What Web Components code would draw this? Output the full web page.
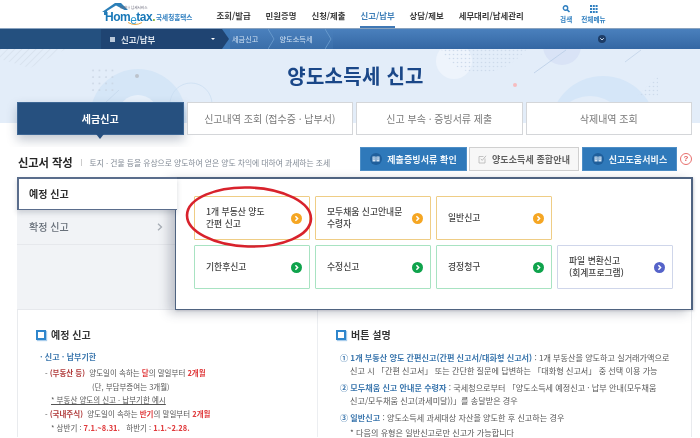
<!DOCTYPE html>
<html lang="ko">
<head>
<meta charset="utf-8">
<title>양도소득세 신고</title>
<style>
  html, body { margin: 0; padding: 0; background: #fff; }
  body { width: 700px; height: 438px; overflow: hidden; font-family: "Noto Sans CJK KR", "Noto Sans", sans-serif; filter: blur(0.5px); }
</style>
</head>
<body>
<ht-header></ht-header>
<ht-subnav></ht-subnav>
<ht-hero></ht-hero>
<ht-filing></ht-filing>
<ht-notes></ht-notes>

<script>
class HtHeader extends HTMLElement {
  constructor() { super(); this.attachShadow({ mode: 'open' }); }
  connectedCallback() {
    this.shadowRoot.innerHTML = `
      <style>
        :host { display: flex; height: 28px; background: #fff; padding-left: 101px; box-sizing: border-box; align-items: stretch; }
        .logo { position: relative; width: 97px; height: 28px; flex: none; }
        .logo svg { position: absolute; left: 0; top: 2px; }
        .logo b { position: absolute; left: 4px; top: 11px; font: 700 12px/12px "Liberation Sans", sans-serif; color: #1878b8; letter-spacing: -.5px; white-space: nowrap; }
        .logo i { font-style: normal; color: #2f9ad0; position: relative; top: 3px; font-weight: 400; }
        .logo em { font-style: normal; color: #8ab83a; }
        .logo small { position: absolute; left: 19px; top: 6px; font-size: 3.6px; line-height: 4px; color: #667; white-space: nowrap; }
        .logo span { position: absolute; left: 55px; top: 12px; font-size: 6.6px; line-height: 10px; font-weight: 700; color: #2f7fc0; white-space: nowrap; }
        nav { display: flex; gap: 14px; margin-left: 18px; }
        a { font-size: 8.4px; font-weight: 700; color: #3c3c3c; line-height: 31px; height: 28px; box-sizing: border-box; padding: 0 0.5px; white-space: nowrap; }
        a.on { color: #3f7fb8; border-bottom: 2px solid #3f78b5; }
        .tools { display: flex; gap: 9px; margin-left: 36px; color: #2f7fc0; font-size: 6.6px; font-weight: 700; text-align: center; }
        .tools div { display: flex; flex-direction: column; align-items: center; padding-top: 5px; line-height: 10px; white-space: nowrap; }
        .tools svg { display: block; margin-bottom: 1px; }
      </style>
      <div class="logo">
        <svg width="30" height="14" viewBox="0 0 30 14"><path d="M1 10 L14 1 L20 1 L27 8 L23.5 8 L15 3.5 L6 9 L6 13 L3 13 L3 10Z" fill="#2c7fb8"/></svg>
        <small>언제나 납세서비스</small>
        <svg style="left:26px;top:22px" width="16" height="4" viewBox="0 0 16 4"><path d="M1 .5 Q8 4.5 15 .5" fill="none" stroke="#eaa640" stroke-width="1"/></svg>
        <b>Hom<i>e</i>tax<em>.</em></b>
        <span>국세청홈택스</span>
      </div>
      <nav>
        <a>조회/발급</a><a>민원증명</a><a>신청/제출</a><a class="on">신고/납부</a><a>상담/제보</a><a>세무대리/납세관리</a>
      </nav>
      <div class="tools">
        <div>
          <svg width="9" height="8" viewBox="0 0 9 8"><circle cx="3.5" cy="3" r="2.2" fill="none" stroke="#2f7fc0" stroke-width="1.4"/><path d="M5 4.6 L7.5 7" stroke="#2f7fc0" stroke-width="1.6"/></svg>
          검색
        </div>
        <div>
          <svg width="9" height="8" viewBox="0 0 9 8" fill="#2f7fc0"><rect x="1" y="0" width="2" height="2"/><rect x="3.8" y="0" width="2" height="2"/><rect x="6.6" y="0" width="2" height="2"/><rect x="1" y="3" width="2" height="2"/><rect x="3.8" y="3" width="2" height="2"/><rect x="6.6" y="3" width="2" height="2"/><rect x="1" y="6" width="2" height="2"/><rect x="3.8" y="6" width="2" height="2"/><rect x="6.6" y="6" width="2" height="2"/></svg>
          전체메뉴
        </div>
      </div>
    `;
  }
}

class HtSubnav extends HTMLElement {
  constructor() { super(); this.attachShadow({ mode: 'open' }); }
  connectedCallback() {
    this.shadowRoot.innerHTML = `
      <style>
        :host { display: flex; height: 21px; align-items: stretch; color: #fff; background: linear-gradient(#4a80bd, #3467a3); border-top: 1px solid #8aa3bf; box-sizing: border-box; position: relative; }
        .lead { width: 101px; background: #24507f; flex: none; }
        .menu { width: 121px; background: #1f4472; flex: none; display: flex; align-items: center; font-size: 8.4px; font-weight: 700; padding-left: 9px; box-sizing: border-box; color: #dfe7f0; }
        .menu u { width: 5px; height: 5px; background: #b9c7d8; margin-right: 6px; }
        .menu em { margin-left: auto; margin-right: 7px; width: 0; height: 0; border: 2.5px solid transparent; border-top-color: #fff; border-bottom: 0; }
        .crumb { display: flex; align-items: center; font-size: 7.2px; color: #cfe0f2; position: relative; background: linear-gradient(#4a80bd, #3a6ea9); }
        .crumb svg { flex: none; height: 20px; width: 8px; }
        .c1 span { padding: 0 10px 0 2px; }
        .c2 span { padding: 0 12px 0 3px; }
        .toggle { position: absolute; left: 598px; top: 6px; width: 8px; height: 8px; border-radius: 50%; background: #1d3c66; }
        .toggle svg { display: block; }
      </style>
      <div class="lead"></div>
      <div class="menu"><u></u>신고/납부<em></em></div>
      <div class="crumb c1">
        <svg viewBox="0 0 8 20" style="background:#3e78b6"><path d="M0 0 L7 10 L0 20Z" fill="#1f4472"/></svg>
        <span>세금신고</span>
      </div>
      <div class="crumb c2">
        <svg viewBox="0 0 8 20"><path d="M0 0 L6 10 L0 20" fill="none" stroke="#6f9fd0" stroke-width=".8"/></svg>
        <span>양도소득세</span>
        <svg viewBox="0 0 8 20"><path d="M0 0 L6 10 L0 20" fill="none" stroke="#6f9fd0" stroke-width=".8"/></svg>
      </div>
      <div class="toggle"><svg width="8" height="8" viewBox="0 0 8 8"><path d="M2.2 3.2 L4 5 L5.8 3.2" fill="none" stroke="#cfdcec" stroke-width="1"/></svg></div>
    `;
  }
}

class HtTab extends HTMLElement {
  constructor() { super(); this.attachShadow({ mode: 'open' }); }
  connectedCallback() {
    this.shadowRoot.innerHTML = `
      <style>
        :host { display: flex; align-items: center; justify-content: center; flex: 1 1 0; height: 33px; box-sizing: border-box; background: #fff; border: 1px solid #d4d6d9; font-size: 10px; color: #7a7a7a; position: relative; white-space: nowrap; }
        :host([active]) { background: #26507f; border-color: #3d6694; color: #fff; font-weight: 700; box-shadow: 0 5px 10px rgba(40,60,90,.28); }
        :host([active])::after { content: ""; position: absolute; left: 50%; bottom: -5px; margin-left: -4px; border: 4px solid transparent; border-top: 5px solid #26507f; border-bottom: 0; }
      </style>
      <slot></slot>
    `;
  }
}

class HtHero extends HTMLElement {
  constructor() { super(); this.attachShadow({ mode: 'open' }); }
  connectedCallback() {
    this.shadowRoot.innerHTML = `
      <style>
        :host { display: block; position: relative; height: 98px; box-sizing: border-box; overflow: hidden; padding: 53px 8px 0 17px; background: linear-gradient(#e3edf9 0, #e3edf9 74px, #fff 74px); }
        .art { position: absolute; left: 0; top: 0; width: 700px; height: 74px; }
        h1 { position: absolute; left: 11px; right: 0; top: 13px; margin: 0; text-align: center; font-size: 20px; line-height: 28px; font-weight: 700; color: #1a4788; letter-spacing: .25px; }
        .tabs { display: flex; gap: 3px; position: relative; }
      </style>
      <svg class="art" viewBox="0 0 700 74">
        <defs>
          <pattern id="d" width="6.5" height="6.5" patternUnits="userSpaceOnUse"><circle cx="2" cy="2" r=".9" fill="#c8d3e2"/></pattern>
          <pattern id="d2" width="4" height="4" patternUnits="userSpaceOnUse"><circle cx="1.5" cy="1.5" r=".8" fill="#cddaeb"/></pattern>
          <pattern id="h" width="5" height="5" patternUnits="userSpaceOnUse" patternTransform="rotate(45)"><rect width="1" height="5" fill="#d9e3ef"/></pattern>
        </defs>
        <path d="M0 0 H66 L30 19 L0 10Z" fill="url(#h)"/>
        <circle cx="138" cy="68" r="48" fill="#d5e6f7"/>
        <circle cx="138" cy="66" r="20" fill="#e8f1fb"/>
        <circle cx="191" cy="55" r="21" fill="none" stroke="#c9dcf0" stroke-width=".7"/>
        <path d="M105 54 L119 41" stroke="#c5d8ec" stroke-width=".8"/>
        <rect x="91" y="16" width="26" height="26" fill="url(#d)"/>
        <circle cx="137" cy="27" r="2" fill="#bcc3cc"/>
        <circle cx="515" cy="36" r="2" fill="#f6bcc0"/>
        <circle cx="454" cy="12" r="18" fill="#eef4fc"/>
        <circle cx="562" cy="-3" r="19" fill="#d9e3f6"/>
        <path d="M441 0 H527 Q505 26 475 24 Q450 20 441 0Z" fill="url(#d2)"/>
        <path d="M534 24 L566 1" stroke="#b9cde6" stroke-width=".8"/>
        <path d="M625 13 L641 1" stroke="#c2d3e8" stroke-width=".8"/>
        <circle cx="603" cy="80" r="53" fill="#d5e6f8"/>
        <circle cx="590" cy="85" r="38" fill="#e3edf9"/>
        <path d="M636 48 L658 48 L658 26Z" fill="url(#d2)"/>
      </svg>
      <h1>양도소득세 신고</h1>
      <div class="tabs">
        <ht-tab active>세금신고</ht-tab>
        <ht-tab>신고내역 조회 (접수증 · 납부서)</ht-tab>
        <ht-tab>신고 부속 · 증빙서류 제출</ht-tab>
        <ht-tab>삭제내역 조회</ht-tab>
      </div>
    `;
  }
}

class HtAction extends HTMLElement {
  constructor() { super(); this.attachShadow({ mode: 'open' }); }
  connectedCallback() {
    const light = this.hasAttribute('light');
    const icon = light
      ? `<svg width="9" height="9" viewBox="0 0 9 9"><path d="M7 3.5 V8 H1 V1.5 H5.5" fill="none" stroke="#b5b5b5" stroke-width=".8"/><path d="M2.8 3.8 L4.2 5.4 L8 .8" fill="none" stroke="#b5b5b5" stroke-width=".9"/></svg>`
      : `<span class="disc"><svg width="8" height="6" viewBox="0 0 8 6"><path d="M.5 .5 H3.6 V5.5 H.5Z M4.4 .5 H7.5 V5.5 H4.4Z" fill="#d6e6f5"/><path d="M1.2 1.8 H3 M1.2 3.2 H3 M5 1.8 H6.8 M5 3.2 H6.8" stroke="#2a6aa6" stroke-width=".5"/></svg></span>`;
    this.shadowRoot.innerHTML = `
      <style>
        :host { display: flex; align-items: center; justify-content: center; gap: 5px; height: 24px; flex: none; box-sizing: border-box; background: #2f79ba; border: 1px solid #4d8ec6; color: #eef5fb; font-size: 9px; font-weight: 700; white-space: nowrap; letter-spacing: .1px; }
        :host([light]) { background: #f7f7f7; border-color: #d0d0d0; color: #5f5f5f; }
        .disc { display: flex; align-items: center; justify-content: center; width: 12px; height: 12px; border-radius: 50%; background: #1f5f9c; }
        svg { display: block; }
      </style>
      ${icon}<slot></slot>
    `;
  }
}

class HtCard extends HTMLElement {
  constructor() { super(); this.attachShadow({ mode: 'open' }); }
  connectedCallback() {
    const kinds = {
      orange: ['#efcd85', '#f5a623'],
      green: ['#a8e3c2', '#0fa34c'],
      violet: ['#cfd6ea', '#5563c9']
    };
    const k = kinds[this.getAttribute('kind')] || kinds.orange;
    this.shadowRoot.innerHTML = `
      <style>
        :host { display: flex; align-items: center; justify-content: space-between; box-sizing: border-box; width: 116px; height: 44px; padding: 0 7px 0 11px; background: #fff; border: 1px solid ${k[0]}; border-radius: 1px; font-size: 8.8px; line-height: 12px; font-weight: 500; color: #444; }
        i { flex: none; width: 11px; height: 11px; border-radius: 50%; background: ${k[1]}; display: block; }
        svg { display: block; }
      </style>
      <div><slot></slot></div>
      <i><svg width="11" height="11" viewBox="0 0 11 11"><path d="M4.4 3.2 L6.6 5.5 L4.4 7.8" fill="none" stroke="#fff" stroke-width="1.5"/></svg></i>
    `;
  }
}

class HtFiling extends HTMLElement {
  constructor() { super(); this.attachShadow({ mode: 'open' }); }
  connectedCallback() {
    this.shadowRoot.innerHTML = `
      <style>
        :host { display: block; position: relative; margin-top: -1px; padding: 0 8px 0 17px; height: 163px; box-sizing: border-box; }
        .head { display: flex; align-items: center; height: 31px; }
        h2 { margin: 1px 0 0 1px; font-size: 11.3px; line-height: 16px; font-weight: 700; color: #262626; white-space: nowrap; letter-spacing: -.1px; }
        .sep { width: 1px; height: 7px; background: #ccc; margin: 1px 8px 0; }
        .desc { font-size: 7.8px; margin-top: 1px; color: #818a95; white-space: nowrap; letter-spacing: -.02px; }
        .acts { display: flex; gap: 3px; margin-left: auto; align-items: center; align-self: flex-start; margin-top: 1px; }
        .acts ht-action:nth-child(2) { margin-left: -1px; }
        .help { width: 12px; height: 12px; flex: none; border: 1px solid #e8706e; border-radius: 50%; box-sizing: border-box; color: #e05a58; font: 700 8px/10px "Liberation Sans", sans-serif; text-align: center; }
        .body { display: flex; height: 133px; }
        .side { width: 158px; flex: none; display: flex; flex-direction: column; box-sizing: border-box; background: #f1f3f6; border-bottom: 1px solid #e6e8ec; }
        .side .cur { height: 33px; box-sizing: border-box; background: #fff; border-top: 2px solid #5a6d8c; border-left: 2px solid #5a6d8c; border-bottom: 1px solid #5a6d8c; padding-left: 10px; margin-right: -2px; font-size: 10px; font-weight: 700; color: #2c2c2c; line-height: 30px; box-shadow: 0 3px 5px rgba(60,70,90,.2); position: relative; z-index: 2; }
        .side .alt { height: 35px; flex: none; box-sizing: border-box; padding: 0 12px 1px; font-size: 10px; font-weight: 500; color: #68707a; display: flex; align-items: center; justify-content: space-between; border-bottom: 1px solid #e6e8ec; }
        .panel { flex: 1; box-sizing: border-box; background: #fff; border: solid #4f6380; border-width: 2px 2px 1.5px 1.5px; padding: 17px 18px 0 18px; display: grid; grid-template-columns: repeat(4, 116px); grid-auto-rows: 44px; gap: 5px 5px; align-content: start; box-shadow: -6px 3px 10px rgba(60,70,90,.28), 1px 1px 2px rgba(60,70,90,.2); position: relative; z-index: 1; }
        .ring { position: absolute; left: 185px; top: 38px; z-index: 3; }
      </style>
      <div class="head">
        <h2>신고서 작성</h2><span class="sep"></span>
        <span class="desc">토지 · 건물 등을 유상으로 양도하여 얻은 양도 차익에 대하여 과세하는 조세</span>
        <div class="acts">
          <ht-action style="width:107px">제출증빙서류 확인</ht-action>
          <ht-action light style="width:110px">양도소득세 종합안내</ht-action>
          <ht-action style="width:95px">신고도움서비스</ht-action>
          <div class="help">?</div>
        </div>
      </div>
      <div class="body">
        <div class="side">
          <div class="cur">예정 신고</div>
          <div class="alt">확정 신고
            <svg width="6" height="8" viewBox="0 0 6 8"><path d="M1 .8 L4.5 4 L1 7.2" fill="none" stroke="#a8aeb6" stroke-width="1.3"/></svg>
          </div>
        </div>
        <div class="panel">
          <ht-card kind="orange">1개 부동산 양도<br>간편 신고</ht-card>
          <ht-card kind="orange">모두채움 신고안내문<br>수령자</ht-card>
          <ht-card kind="orange">일반신고</ht-card>
          <span></span>
          <ht-card kind="green">기한후신고</ht-card>
          <ht-card kind="green">수정신고</ht-card>
          <ht-card kind="green">경정청구</ht-card>
          <ht-card kind="violet">파일 변환신고<br>(회계프로그램)</ht-card>
        </div>
      </div>
      <svg class="ring" width="130" height="66" viewBox="0 0 130 66"><ellipse cx="64" cy="33" rx="62" ry="29.5" transform="rotate(2 64 33)" fill="none" stroke="#d8222c" stroke-width="2.6"/></svg>
    `;
  }
}

class HtNotes extends HTMLElement {
  constructor() { super(); this.attachShadow({ mode: 'open' }); }
  connectedCallback() {
    this.shadowRoot.innerHTML = `
      <style>
        :host { display: grid; grid-template-columns: 299px 1fr; margin: 0 8px 0 17px; border: 1px solid #e9ebee; border-bottom: 0; height: 128px; overflow: hidden; font-size: 7.5px; color: #555; box-sizing: border-box; }
        section { padding-top: 19px; white-space: nowrap; }
        .l { padding-left: 18px; }
        .r { padding-left: 18px; border-left: 1px solid #eceef1; font-size: 8.1px; }
        h3 { display: flex; align-items: center; gap: 5px; margin: 0 0 10px; font-size: 10px; line-height: 12px; font-weight: 700; color: #333; }
        h3 u { width: 10px; height: 10px; box-sizing: border-box; border: 2px solid #2f86cc; box-shadow: 1px 1px 1px #a9cdec; }
        p { margin: 0; line-height: 12px; }
        .t { color: #3a76ad; font-size: 8px; font-weight: 700; padding-left: 4px; margin-bottom: 4px; }
        .li { padding-left: 9px; margin-bottom: 2px; }
        .sub { padding-left: 15px; }
        .in { padding-left: 56px; }
        .red { color: #e03a3c; font-weight: 700; }
        .dk { color: #b03a3a; font-weight: 700; }
        .u { text-decoration: underline; }
        .n { color: #3a76ad; font-weight: 700; }
        .row { padding-left: 4px; line-height: 13px; }
        .cont { padding-left: 14px; line-height: 13px; margin-bottom: 4px; }
        .star { padding-left: 14px; line-height: 13px; margin-top: 2px; }
      </style>
      <section class="l">
        <h3><u></u>예정 신고</h3>
        <p class="t">· 신고 · 납부기한</p>
        <p class="li">- <span class="dk">(부동산 등)</span>&nbsp; 양도일이 속하는 <span class="red">달</span>의 말일부터 <span class="red">2개월</span></p>
        <p class="in">(단, 부담부증여는 3개월)</p>
        <p class="sub" style="margin:1px 0 2px"><span class="u">* 부동산 양도의 신고 · 납부기한 예시</span></p>
        <p class="li">- <span class="dk">(국내주식)</span>&nbsp; 양도일이 속하는 <span class="red">반기</span>의 말일부터 <span class="red">2개월</span></p>
        <p class="sub">* 상반기 : <span class="red">7.1.~8.31.</span>&nbsp;&nbsp; 하반기 : <span class="red">1.1.~2.28.</span></p>
        <p class="li" style="margin-top:3px">- <span class="dk">(국외주식 등)</span>&nbsp; 양도일이 속하는 <span class="red">연도</span>의 말일부터 <span class="red">5개월</span></p>
      </section>
      <section class="r">
        <h3><u></u>버튼 설명</h3>
        <p class="row"><span class="n">① 1개 부동산 양도 간편신고(간편 신고서/대화형 신고서)</span> : 1개 부동산을 양도하고 실거래가액으로</p>
        <p class="cont">신고 시 「간편 신고서」 또는 간단한 질문에 답변하는 「대화형 신고서」 중 선택 이용 가능</p>
        <p class="row"><span class="n">② 모두채움 신고 안내문 수령자</span> : 국세청으로부터 「양도소득세 예정신고 · 납부 안내(모두채움</p>
        <p class="cont">신고/모두채움 신고(과세미달))」를 송달받은 경우</p>
        <p class="row"><span class="n">③ 일반신고</span> : 양도소득세 과세대상 자산을 양도한 후 신고하는 경우</p>
        <p class="star">* 다음의 유형은 일반신고로만 신고가 가능합니다</p>
      </section>
    `;
  }
}

customElements.define('ht-header', HtHeader);
customElements.define('ht-subnav', HtSubnav);
customElements.define('ht-tab', HtTab);
customElements.define('ht-hero', HtHero);
customElements.define('ht-action', HtAction);
customElements.define('ht-card', HtCard);
customElements.define('ht-filing', HtFiling);
customElements.define('ht-notes', HtNotes);
</script>
</body>
</html>
